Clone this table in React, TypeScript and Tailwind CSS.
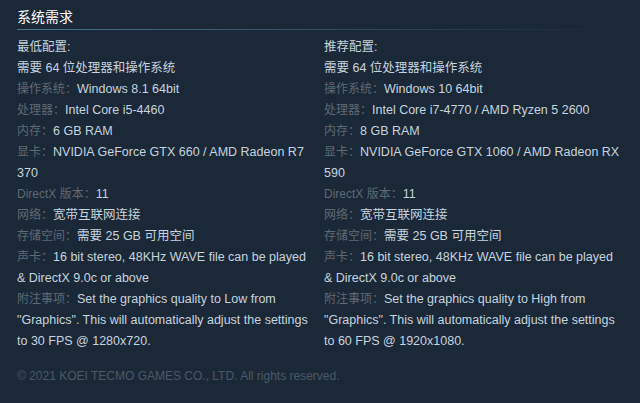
const minimum = [
  { label: '操作系统', value: 'Windows 8.1 64bit' },
  { label: '处理器', value: 'Intel Core i5-4460' },
  { label: '内存', value: '6 GB RAM' },
  { label: '显卡', value: 'NVIDIA GeForce GTX 660 / AMD Radeon R7 370' },
  { label: 'DirectX 版本', value: '11' },
  { label: '网络', value: '宽带互联网连接' },
  { label: '存储空间', value: '需要 25 GB 可用空间' },
  { label: '声卡', value: '16 bit stereo, 48KHz WAVE file can be played & DirectX 9.0c or above' },
  {
    label: '附注事项',
    value: 'Set the graphics quality to Low from "Graphics". This will automatically adjust the settings to 30 FPS @ 1280x720.',
  },
];

const recommended = [
  { label: '操作系统', value: 'Windows 10 64bit' },
  { label: '处理器', value: 'Intel Core i7-4770 / AMD Ryzen 5 2600' },
  { label: '内存', value: '8 GB RAM' },
  { label: '显卡', value: 'NVIDIA GeForce GTX 1060 / AMD Radeon RX 590' },
  { label: 'DirectX 版本', value: '11' },
  { label: '网络', value: '宽带互联网连接' },
  { label: '存储空间', value: '需要 25 GB 可用空间' },
  { label: '声卡', value: '16 bit stereo, 48KHz WAVE file can be played & DirectX 9.0c or above' },
  {
    label: '附注事项',
    value: 'Set the graphics quality to High from "Graphics". This will automatically adjust the settings to 60 FPS @ 1920x1080.',
  },
];

type Spec = { label: string; value: string };

const SpecColumn = ({ title, specs }: { title: string; specs: Spec[] }) => (
  <div>
    <div className="text-[#c6d4df]">{title}:</div>
    <div className="text-[#c6d4df]">需要 64 位处理器和操作系统</div>
    <ul>
      {specs.map((s) => (
        <li key={s.label} className="text-[#c6d4df]">
          <span className="text-[#5f6a74] text-[12px]">{s.label}：</span>
          {s.value}
        </li>
      ))}
    </ul>
  </div>
);

export default function App() {
  return (
    <div
      className="w-[640px] h-[403px] bg-[#1b2838] pl-[17px] pr-[19px] pt-[7px]"
      style={{ fontFamily: '"Liberation Sans", Arial, "Noto Sans CJK SC", sans-serif' }}
    >
      <h2 className="text-[14px] leading-[20px] text-white">系统需求</h2>
      <div className="h-px mt-[2px] bg-gradient-to-r from-[#4d7693] via-[#2f4f68] to-[#1b2838]" />
      <div className="grid grid-cols-2 gap-[10px] mt-[7px] text-[12.5px] leading-[21px]">
        <SpecColumn title="最低配置" specs={minimum} />
        <SpecColumn title="推荐配置" specs={recommended} />
      </div>
      <p className="mt-[16px] text-[12px] leading-[16px] text-[#4b5966]">
        © 2021 KOEI TECMO GAMES CO., LTD. All rights reserved.
      </p>
    </div>
  );
}
